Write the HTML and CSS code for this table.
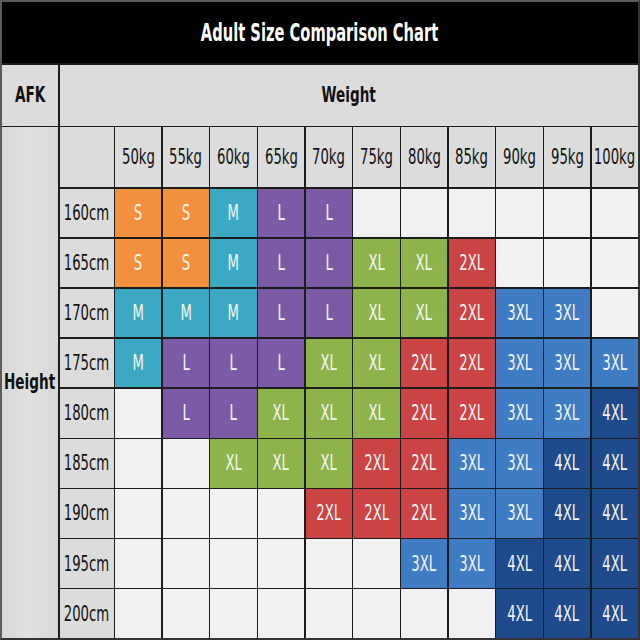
FILE: index.html
```html
<!DOCTYPE html>
<html>
<head>
<meta charset="utf-8">
<title>Adult Size Comparison Chart</title>
<link rel="stylesheet" href="styles.css">
</head>
<body>
<div class="chart">
  <div class="title"><span class="sqt">Adult Size Comparison Chart</span></div>
  <div class="head afk"><span class="sqb">AFK</span></div>
  <div class="head weight"><span class="sqb">Weight</span></div>
  <div class="head height"><span class="sqb">Height</span></div>
  <div class="lab corner"></div>
  <div class="lab"><span class="sq">50kg</span></div>
  <div class="lab"><span class="sq">55kg</span></div>
  <div class="lab"><span class="sq">60kg</span></div>
  <div class="lab"><span class="sq">65kg</span></div>
  <div class="lab"><span class="sq">70kg</span></div>
  <div class="lab"><span class="sq">75kg</span></div>
  <div class="lab"><span class="sq">80kg</span></div>
  <div class="lab"><span class="sq">85kg</span></div>
  <div class="lab"><span class="sq">90kg</span></div>
  <div class="lab"><span class="sq">95kg</span></div>
  <div class="lab"><span class="sq">100kg</span></div>

  <div class="lab"><span class="sq">160cm</span></div>
  <div class="c s"><span class="sq">S</span></div>
  <div class="c s"><span class="sq">S</span></div>
  <div class="c m"><span class="sq">M</span></div>
  <div class="c l"><span class="sq">L</span></div>
  <div class="c l"><span class="sq">L</span></div>
  <div class="c e"></div>
  <div class="c e"></div>
  <div class="c e"></div>
  <div class="c e"></div>
  <div class="c e"></div>
  <div class="c e"></div>

  <div class="lab"><span class="sq">165cm</span></div>
  <div class="c s"><span class="sq">S</span></div>
  <div class="c s"><span class="sq">S</span></div>
  <div class="c m"><span class="sq">M</span></div>
  <div class="c l"><span class="sq">L</span></div>
  <div class="c l"><span class="sq">L</span></div>
  <div class="c xl"><span class="sq">XL</span></div>
  <div class="c xl"><span class="sq">XL</span></div>
  <div class="c x2"><span class="sq">2XL</span></div>
  <div class="c e"></div>
  <div class="c e"></div>
  <div class="c e"></div>

  <div class="lab"><span class="sq">170cm</span></div>
  <div class="c m"><span class="sq">M</span></div>
  <div class="c m"><span class="sq">M</span></div>
  <div class="c m"><span class="sq">M</span></div>
  <div class="c l"><span class="sq">L</span></div>
  <div class="c l"><span class="sq">L</span></div>
  <div class="c xl"><span class="sq">XL</span></div>
  <div class="c xl"><span class="sq">XL</span></div>
  <div class="c x2"><span class="sq">2XL</span></div>
  <div class="c x3"><span class="sq">3XL</span></div>
  <div class="c x3"><span class="sq">3XL</span></div>
  <div class="c e"></div>

  <div class="lab"><span class="sq">175cm</span></div>
  <div class="c m"><span class="sq">M</span></div>
  <div class="c l"><span class="sq">L</span></div>
  <div class="c l"><span class="sq">L</span></div>
  <div class="c l"><span class="sq">L</span></div>
  <div class="c xl"><span class="sq">XL</span></div>
  <div class="c xl"><span class="sq">XL</span></div>
  <div class="c x2"><span class="sq">2XL</span></div>
  <div class="c x2"><span class="sq">2XL</span></div>
  <div class="c x3"><span class="sq">3XL</span></div>
  <div class="c x3"><span class="sq">3XL</span></div>
  <div class="c x3"><span class="sq">3XL</span></div>

  <div class="lab"><span class="sq">180cm</span></div>
  <div class="c e"></div>
  <div class="c l"><span class="sq">L</span></div>
  <div class="c l"><span class="sq">L</span></div>
  <div class="c xl"><span class="sq">XL</span></div>
  <div class="c xl"><span class="sq">XL</span></div>
  <div class="c xl"><span class="sq">XL</span></div>
  <div class="c x2"><span class="sq">2XL</span></div>
  <div class="c x2"><span class="sq">2XL</span></div>
  <div class="c x3"><span class="sq">3XL</span></div>
  <div class="c x3"><span class="sq">3XL</span></div>
  <div class="c x4"><span class="sq">4XL</span></div>

  <div class="lab"><span class="sq">185cm</span></div>
  <div class="c e"></div>
  <div class="c e"></div>
  <div class="c xl"><span class="sq">XL</span></div>
  <div class="c xl"><span class="sq">XL</span></div>
  <div class="c xl"><span class="sq">XL</span></div>
  <div class="c x2"><span class="sq">2XL</span></div>
  <div class="c x2"><span class="sq">2XL</span></div>
  <div class="c x3"><span class="sq">3XL</span></div>
  <div class="c x3"><span class="sq">3XL</span></div>
  <div class="c x4"><span class="sq">4XL</span></div>
  <div class="c x4"><span class="sq">4XL</span></div>

  <div class="lab"><span class="sq">190cm</span></div>
  <div class="c e"></div>
  <div class="c e"></div>
  <div class="c e"></div>
  <div class="c e"></div>
  <div class="c x2"><span class="sq">2XL</span></div>
  <div class="c x2"><span class="sq">2XL</span></div>
  <div class="c x2"><span class="sq">2XL</span></div>
  <div class="c x3"><span class="sq">3XL</span></div>
  <div class="c x3"><span class="sq">3XL</span></div>
  <div class="c x4"><span class="sq">4XL</span></div>
  <div class="c x4"><span class="sq">4XL</span></div>

  <div class="lab"><span class="sq">195cm</span></div>
  <div class="c e"></div>
  <div class="c e"></div>
  <div class="c e"></div>
  <div class="c e"></div>
  <div class="c e"></div>
  <div class="c e"></div>
  <div class="c x3"><span class="sq">3XL</span></div>
  <div class="c x3"><span class="sq">3XL</span></div>
  <div class="c x4"><span class="sq">4XL</span></div>
  <div class="c x4"><span class="sq">4XL</span></div>
  <div class="c x4"><span class="sq">4XL</span></div>

  <div class="lab"><span class="sq">200cm</span></div>
  <div class="c e"></div>
  <div class="c e"></div>
  <div class="c e"></div>
  <div class="c e"></div>
  <div class="c e"></div>
  <div class="c e"></div>
  <div class="c e"></div>
  <div class="c e"></div>
  <div class="c x4"><span class="sq">4XL</span></div>
  <div class="c x4"><span class="sq">4XL</span></div>
  <div class="c x4"><span class="sq">4XL</span></div>
</div>
</body>
</html>
```
FILE: styles.css
```css
html, body {
  margin: 0;
  padding: 0;
}
body {
  width: 640px;
  height: 640px;
  overflow: hidden;
  background: #ffffff;
  font-family: "DejaVu Sans Condensed", "DejaVu Sans", sans-serif;
  font-stretch: condensed;
}
.chart {
  box-sizing: border-box;
  width: 640px;
  height: 640px;
  border: 2px solid #5a5a5a;
  border-right-color: #333;
  border-bottom-color: #333;
  display: grid;
  grid-template-columns: 56px 54px repeat(11, minmax(0, 1fr));
  grid-template-rows: 61px 61px 60px repeat(9, minmax(0, 1fr));
  gap: 1.5px;
  background: #1c1c1c;
}
.chart > div {
  display: flex;
  align-items: center;
  justify-content: center;
  min-width: 0;
  overflow: visible;
  white-space: nowrap;
}
.sq {
  display: inline-block;
  font-size: 21px;
  transform: scaleX(0.7);
}
.sqb {
  display: inline-block;
  font-weight: bold;
  transform: scaleX(0.72);
}
.sqt {
  display: inline-block;
  font-weight: bold;
  transform: scaleX(0.68);
}
.title {
  grid-column: 1 / -1;
  background: #000;
  color: #fff;
  font-size: 24px;
}
.head {
  background: #dcdcdc;
  color: #111;
  font-size: 21px;
}
.afk {
  grid-column: 1;
  grid-row: 2;
}
.weight {
  grid-column: 2 / -1;
  grid-row: 2;
}
.height {
  grid-column: 1;
  grid-row: 3 / -1;
  background: linear-gradient(90deg, #d8d8d8, #e0e0e0 50%, #d8d8d8);
}
.lab {
  background: #dcdcdc;
  color: #111;
}
.c {
  color: #f6f6f2;
}
.e { background: #f1f1f1; }
.s  { background: #f2903d; }
.m  { background: #3ca9c4; }
.l  { background: #7c5aa6; }
.xl { background: #8db44b; }
.x2 { background: #cb4343; }
.x3 { background: #3f7cc4; }
.x4 { background: #1f4b8c; }
```
